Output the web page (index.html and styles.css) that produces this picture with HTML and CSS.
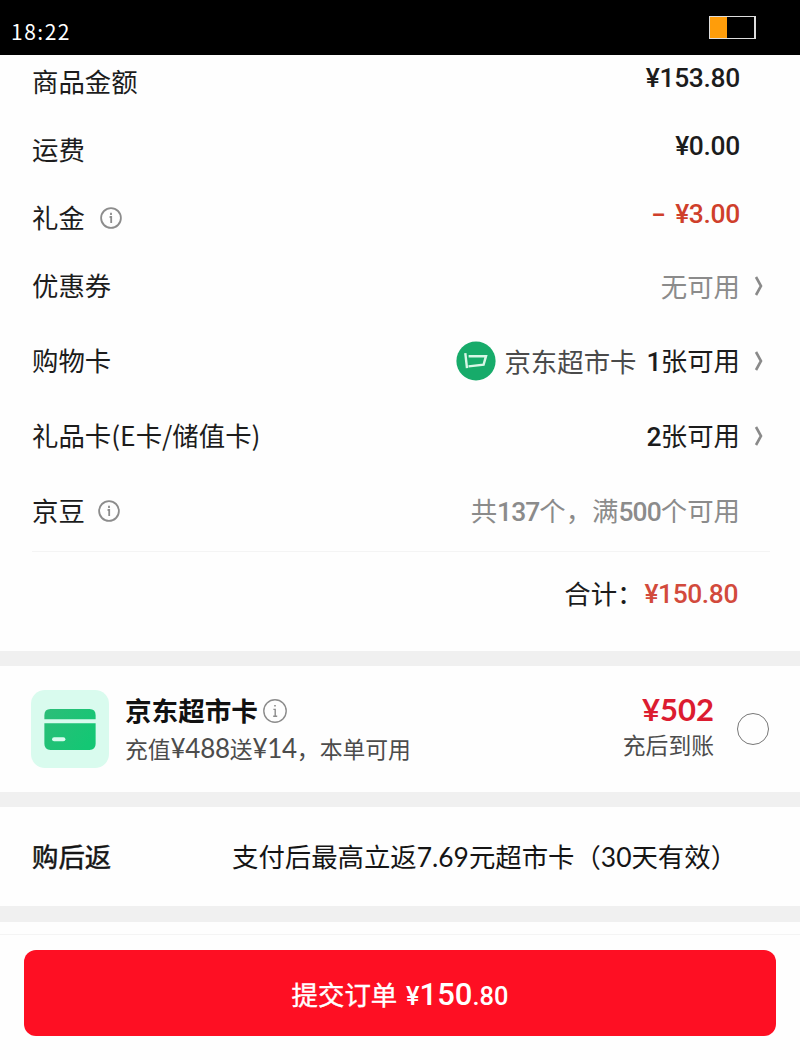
FILE: index.html
```html
<!DOCTYPE html>
<html lang="zh-CN">
<head>
    <meta charset="UTF-8">
    <meta name="viewport" content="width=device-width, initial-scale=1.0">
    <title>提交订单</title>
    <link rel="stylesheet" href="styles.css">
</head>
<body>
    <header class="status-bar">
        <span class="clock">18:22</span>
        <div class="battery"><div class="battery-level"></div></div>
    </header>

    <section class="fees">
        <div class="row">
            <span class="label">商品金额</span>
            <span class="value price">¥153.80</span>
        </div>
        <div class="row">
            <span class="label">运费</span>
            <span class="value price">¥0.00</span>
        </div>
        <div class="row">
            <span class="label">礼金</span>
            <svg class="info" viewBox="0 0 22 22"><circle cx="11" cy="11" r="9.9"/><path d="M9.6 10H11.2V16M11 5.8V8"/></svg>
            <span class="value price discount"><span class="minus">-</span>¥3.00</span>
        </div>
        <div class="row">
            <span class="label">优惠券</span>
            <span class="value muted">无可用</span>
            <svg class="arrow" viewBox="0 0 10 20"><path d="M2 1L7 10L2 19"/></svg>
        </div>
        <div class="row wide">
            <span class="label">购物卡</span>
            <span class="value card-value">
                <svg class="card-logo" viewBox="0 0 40 40">
                    <circle cx="20" cy="20" r="19.6"/>
                    <path d="M9.3 12.2L11 27.2M12.6 15.2H30L27.6 23.6L12.5 25.4"/>
                </svg>
                <span class="card-name">京东超市卡</span>
                <span class="count"><b>1</b>张可用</span>
            </span>
            <svg class="arrow" viewBox="0 0 10 20"><path d="M2 1L7 10L2 19"/></svg>
        </div>
        <div class="row wide">
            <span class="label">礼品卡(E卡/储值卡)</span>
            <span class="value count"><b>2</b>张可用</span>
            <svg class="arrow" viewBox="0 0 10 20"><path d="M2 1L7 10L2 19"/></svg>
        </div>
        <div class="row wide beans">
            <span class="label">京豆</span>
            <svg class="info" viewBox="0 0 22 22"><circle cx="11" cy="11" r="9.9"/><path d="M9.6 10H11.2V16M11 5.8V8"/></svg>
            <span class="value muted">共<b>137</b>个，满<b>500</b>个可用</span>
        </div>
        <div class="total">
            <span class="label">合计：</span>
            <span class="total-price">¥150.80</span>
        </div>
    </section>

    <section class="recharge">
        <div class="recharge-icon">
            <svg viewBox="0 0 50 40">
                <defs>
                    <linearGradient id="green" x1="0" y1="0" x2="1" y2="0.6">
                        <stop offset="0" stop-color="#2cbd78"/>
                        <stop offset="1" stop-color="#14c774"/>
                    </linearGradient>
                </defs>
                <path fill="url(#green)" d="M0 10V6Q0 0 6 0H44Q50 0 50 6V10ZM0 14H50V34Q50 40 44 40H6Q0 40 0 34Z"/>
                <rect x="7.5" y="27.5" width="13" height="4" rx="2" fill="#d9fbee"/>
            </svg>
        </div>
        <div class="recharge-info">
            <div class="recharge-title">
                <span>京东超市卡</span>
                <svg class="info" viewBox="0 0 24 24"><circle cx="12" cy="12" r="11.2"/><path d="M10.4 10.4H12.2V17M10.2 17.2H14.2M11.2 6.8H12.8"/></svg>
            </div>
            <div class="recharge-desc">充值<i>¥488</i>送<i>¥14</i>，本单可用</div>
        </div>
        <div class="recharge-amount">
            <div class="recharge-price">¥502</div>
            <div class="recharge-note">充后到账</div>
        </div>
        <div class="radio"></div>
    </section>

    <section class="rebate">
        <span class="rebate-label">购后返</span>
        <span class="rebate-text">支付后最高立返<i>7.69</i>元超市卡（<i>30</i>天有效）</span>
    </section>

    <footer class="submit-bar">
        <button class="submit">提交订单 <span class="submit-price">¥<big>150</big>.80</span></button>
    </footer>
</body>
</html>
```
FILE: styles.css
```css
* {
    box-sizing: border-box;
}
body {
    margin: 0;
    width: 800px;
    height: 1060px;
    overflow: hidden;
    background: #fefefe;
    color: #1c1c1c;
    font-family: "Noto Sans CJK SC", sans-serif;
    font-size: 26.4px;
    line-height: 40px;
    white-space: nowrap;
}
b {
    font-family: Roboto, sans-serif;
    font-weight: 500;
}
i {
    font-family: Lato, sans-serif;
    font-style: normal;
}
.status-bar {
    display: flex;
    justify-content: space-between;
    height: 55px;
    padding: 16px 44px 0 11px;
    background: #000;
    color: #fff;
}
.clock {
    font-size: 21px;
    line-height: 30px;
    letter-spacing: 1.5px;
}
.battery {
    width: 47px;
    height: 23px;
    border: 1px solid #ddd;
    border-right-width: 2px;
}
.battery-level {
    width: 17px;
    height: 21px;
    background: #ff9d0a;
}

/* price breakdown */
.fees {
    height: 596px;
    padding: 0 30px 0 32px;
}
.row {
    display: flex;
    align-items: center;
    height: 54px;
    margin-bottom: 14px;
    padding-right: 30px;
}
.row.wide {
    margin: 0 0 21px;
}
.row:nth-child(4) {
    margin-bottom: 21px;
}
.label {
    padding-bottom: 2px;
}
.info {
    width: 22px;
    height: 22px;
    margin-left: 15px;
    fill: none;
    stroke: #8c8c8c;
    stroke-width: 1.8;
}
.beans .info {
    margin-left: 13px;
}
.beans b {
    letter-spacing: -0.9px;
}
.value {
    margin-left: auto;
}
.price {
    padding-bottom: 8px;
    font-family: Roboto, sans-serif;
    font-weight: 500;
    letter-spacing: -0.3px;
}
.discount {
    color: #cf3f2b;
}
.minus {
    display: inline-block;
    margin-right: 12px;
    transform: scaleX(1.6);
}
.muted {
    color: #8b8b8b;
}
.count b {
    letter-spacing: -0.6px;
}
.arrow {
    width: 10px;
    height: 20px;
    margin: 0 -24px 0 14px;
    fill: none;
    stroke: #8a8a8a;
    stroke-width: 2.6;
}
.card-value {
    display: flex;
    align-items: center;
}
.card-logo {
    width: 40px;
    height: 40px;
    margin-right: 8px;
    fill: #17ab6a;
}
.card-logo path {
    fill: none;
    stroke: #d8f7e6;
    stroke-width: 2.4;
}
.card-name {
    margin-right: 10px;
    color: #4a4a4a;
}
.total {
    display: flex;
    justify-content: flex-end;
    align-items: center;
    margin-top: -8px;
    padding: 21px 32px 0 0;
    border-top: 1px solid #f4f4f4;
}
.total-price {
    margin-left: 1px;
    font-family: Roboto, sans-serif;
    font-weight: 500;
    letter-spacing: -0.4px;
    color: #d24a3c;
}

/* recharge offer */
.recharge {
    display: flex;
    align-items: center;
    height: 156px;
    padding: 0 31px;
    border: solid #f0f0f0;
    border-width: 15px 0;
}
.recharge-icon {
    display: flex;
    align-items: center;
    justify-content: center;
    width: 78px;
    height: 78px;
    border-radius: 14px;
    background: #d9fbee;
}
.recharge-icon svg {
    width: 52px;
    height: 41px;
}
.recharge-info {
    margin-left: 16px;
}
.recharge-title {
    display: flex;
    align-items: center;
    height: 38px;
    font-size: 26.6px;
    font-weight: 700;
    color: #111;
}
.recharge-title .info {
    width: 24px;
    height: 24px;
    margin: 2px 0 0 5px;
    stroke-width: 1.4;
}
.recharge-desc {
    height: 38px;
    font-size: 22.8px;
    line-height: 38px;
    color: #4c4c4c;
}
.recharge-desc i {
    font-size: 26px;
    letter-spacing: -0.3px;
}
.recharge-amount {
    margin-left: auto;
    text-align: right;
}
.recharge-price {
    height: 35px;
    font-family: Lato, sans-serif;
    font-size: 31px;
    font-weight: 700;
    line-height: 33px;
    color: #dc1c30;
}
.recharge-note {
    height: 37px;
    font-size: 22.8px;
    line-height: 33px;
    color: #4c4c4c;
}
.radio {
    width: 32px;
    height: 32px;
    margin-left: 23px;
    border: 1px solid #777;
    border-radius: 50%;
}

/* rebate */
.rebate {
    display: flex;
    align-items: center;
    height: 115px;
    padding: 0 32px 1px;
    border-bottom: 16px solid #f0f0f0;
    color: #151515;
}
.rebate-label {
    width: 200px;
    -webkit-text-stroke: 0.5px #151515;
}

/* submit */
.submit-bar {
    margin-top: 12px;
    padding: 15px 24px 0;
    border-top: 1px solid #f4f4f4;
}
.submit {
    display: block;
    width: 752px;
    height: 86px;
    border: none;
    border-radius: 12px;
    background: #fe0f23;
    color: #fff;
    font-family: inherit;
    font-size: 26.4px;
    -webkit-text-stroke: 0.4px #fff;
}
.submit-price {
    margin-left: 3px;
    font-family: Roboto, sans-serif;
    font-weight: 500;
    font-size: 25.4px;
    -webkit-text-stroke: 0;
}
.submit-price big {
    font-size: 31px;
}
```
